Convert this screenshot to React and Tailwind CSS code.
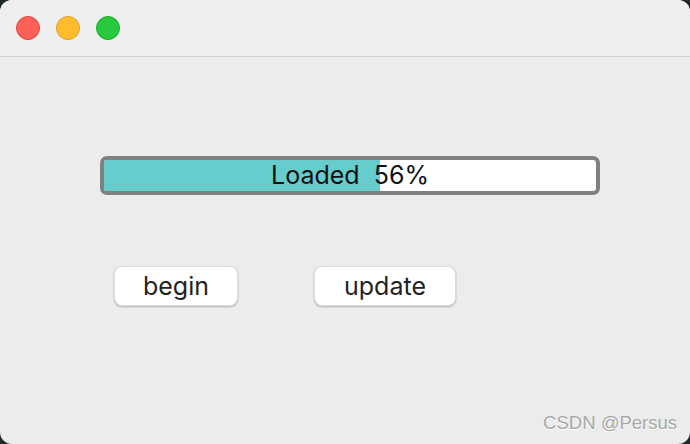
import React from 'react';

const ProgressBar = ({ value }) => (
  <div className="relative h-[39px] w-[500px] overflow-hidden rounded-[7px] border-[4px] border-[#808080] bg-white">
    <div className="h-full bg-[#66cccc]" style={{ width: `${value}%` }} />
    <div className="absolute inset-0 flex items-center justify-center text-[25px] text-[#111] whitespace-pre">
      {`Loaded  ${value}%`}
    </div>
  </div>
);

const Button = ({ children, width }) => (
  <button className={`h-[40px] ${width} rounded-[8px] bg-white text-[25px] leading-none text-[#222] shadow-[0_1px_2px_rgba(0,0,0,0.25)] border border-[#dcdcdc]`}>
    {children}
  </button>
);

const App = () => {
  return (
    <div className="h-[444px] w-[690px] bg-[#1d2a2a] font-['Inter',sans-serif]">
      <div className="flex h-full w-full flex-col overflow-hidden rounded-[12px] bg-[#ececec]">
        {/* title bar */}
        <div className="flex h-[57px] items-center gap-[16px] border-b border-[#d2d2d2] bg-[#efefef] pl-[16px]">
          <div className="h-[24px] w-[24px] rounded-full border border-[#e0443e] bg-[#fe5f57]" />
          <div className="h-[24px] w-[24px] rounded-full border border-[#dea123] bg-[#febc2e]" />
          <div className="h-[24px] w-[24px] rounded-full border border-[#1aab29] bg-[#28c840]" />
        </div>

        <div className="relative flex flex-1 flex-col">
          <div className="ml-[100px] mt-[99px]">
            <ProgressBar value={56} />
          </div>
          <div className="ml-[114px] mt-[71px] flex gap-[76px]">
            <Button width="w-[124px]">begin</Button>
            <Button width="w-[142px]">update</Button>
          </div>
          <div className="absolute bottom-[7px] right-[13px] font-['Liberation_Sans',Arial,sans-serif] text-[18.5px] text-[#a8a8a8] [text-shadow:0_1px_0_#fff]">
            CSDN @Persus
          </div>
        </div>
      </div>
    </div>
  );
};

export default App;
